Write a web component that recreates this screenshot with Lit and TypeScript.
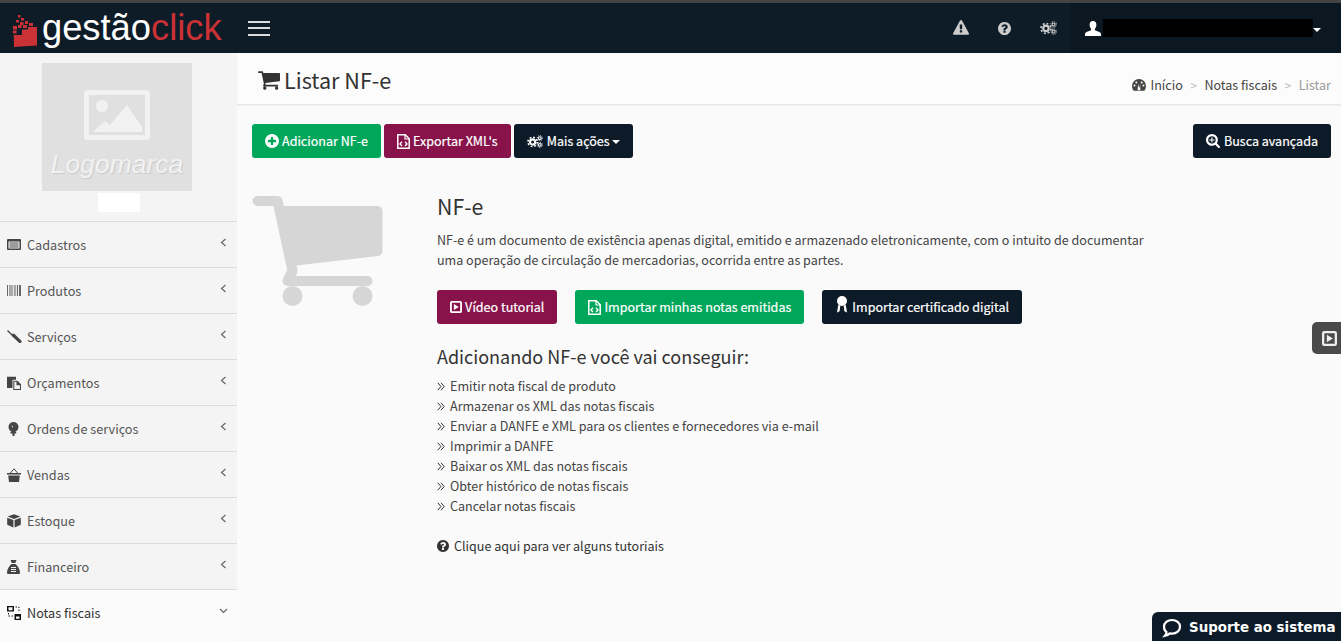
import { LitElement, html, css } from 'lit';
import { customElement } from 'lit/decorators.js';

// font awesome style paths, drawn on a 1792 grid
const P = {
  cart: 'M704 1536q0 52-38 90t-90 38-90-38-38-90 38-90 90-38 90 38 38 90zm896 0q0 52-38 90t-90 38-90-38-38-90 38-90 90-38 90 38 38 90zm128-1088v512q0 24-16.500 42.500t-40.500 21.500l-1044 122q13 60 13 70 0 16-24 64h920q26 0 45 19t19 45-19 45-45 19h-1024q-26 0-45-19t-19-45q0-11 8-31.500t16-36 21.500-40 15.500-29.500l-177-823h-204q-26 0-45-19t-19-45 19-45 45-19h256q16 0 28.500 6.500t19.500 15.500 13 24.500 8 26 5.500 29.500 4.500 26h1201q26 0 45 19t19 45z',
  plus: 'M1344 960v-128q0-26-19-45t-45-19h-256v-256q0-26-19-45t-45-19h-128q-26 0-45 19t-19 45v256h-256q-26 0-45 19t-19 45v128q0 26 19 45t45 19h256v256q0 26 19 45t45 19h128q26 0 45-19t19-45v-256h256q26 0 45-19t19-45zm320-64q0 209-103 385.500t-279.500 279.500-385.500 103-385.500-103-279.500-279.500-103-385.500 103-385.500 279.500-279.500 385.500-103 385.500 103 279.500 279.500 103 385.500z',
  question: 'M1024 1376v-192q0-14-9-23t-23-9h-192q-14 0-23 9t-9 23v192q0 14 9 23t23 9h192q14 0 23-9t9-23zm256-672q0-88-55.500-163t-138.500-116-170-41q-243 0-371 213-15 24 8 42l132 100q7 6 19 6 16 0 25-12 53-68 86-92 34-24 86-24 48 0 85.500 26t37.500 59q0 38-20 61t-68 45q-63 28-115.500 86.500t-52.500 125.500v36q0 14 9 23t23 9h192q14 0 23-9t9-23q0-19 21.500-49.500t54.500-49.500q32-18 49-28.500t46-35 44.500-48 28-60.500 12.500-81zm384 192q0 209-103 385.500t-279.500 279.500-385.500 103-385.500-103-279.500-279.500-103-385.500 103-385.500 279.500-279.500 385.500-103 385.500 103 279.500 279.500 103 385.500z',
  warning: 'M1024 1375v-190q0-14-9.500-23.500t-22.500-9.500h-192q-13 0-22.500 9.500t-9.500 23.500v190q0 14 9.500 23.500t22.500 9.500h192q13 0 22.500-9.500t9.500-23.500zm-2-374l18-459q0-12-10-19-13-11-24-11h-220q-11 0-24 11-10 7-10 21l17 457q0 10 10 16.500t24 6.500h185q14 0 23.500-6.500t10.500-16.500zm-14-934l768 1408q35 63-2 126-17 29-46.500 46t-63.500 17h-1536q-34 0-63.500-17t-46.500-46q-37-63-2-126l768-1408q17-31 47-49t65-18 65 18 47 49z',
  search: 'M1088 800v64q0 13-9.500 22.500t-22.500 9.500h-224v224q0 13-9.500 22.500t-22.500 9.500h-64q-13 0-22.500-9.500t-9.500-22.500v-224h-224q-13 0-22.500-9.500t-9.500-22.500v-64q0-13 9.500-22.500t22.500-9.500h224v-224q0-13 9.500-22.500t22.500-9.500h64q13 0 22.500 9.500t9.500 22.500v224h224q13 0 22.500 9.500t9.500 22.500zm128 32q0-185-131.500-316.500t-316.500-131.500-316.500 131.500-131.500 316.500 131.500 316.500 316.500 131.500 316.500-131.500 131.500-316.500zm512 832q0 53-37.500 90.500t-90.500 37.500q-54 0-90-38l-343-342q-179 124-399 124-143 0-273.500-55.500t-225-150-150-225-55.500-273.500 55.500-273.500 150-225 225-150 273.500-55.500 273.500 55.500 225 150 150 225 55.500 273.500q0 220-124 399l343 343q37 37 37 90z',
};

const CIRCLE_BOX = '128 128 1536 1536';
const SEARCH_BOX = '64 128 1664 1664';

const fa = (d: string, size = 14, box = '0 0 1792 1792', cls = 'ic') => html`<svg class=${cls} width=${size} height=${size} viewBox=${box} fill="currentColor"><path d=${d}></path></svg>`;

const cogs = (w = 17, h = 14) => html`<svg class="ic wide" width=${w} height=${h} viewBox="0 0 20 16" fill="none" stroke="currentColor">
  <circle cx="7" cy="8.500" r="3.200" stroke-width="2.600"></circle>
  <circle cx="7" cy="8.500" r="5.800" stroke-width="2" stroke-dasharray="2.300 2.250"></circle>
  <circle cx="16" cy="3.800" r="1.700" stroke-width="1.400"></circle>
  <circle cx="16" cy="3.800" r="3.200" stroke-width="1.200" stroke-dasharray="1.200 1.310"></circle>
  <circle cx="16" cy="12.200" r="1.700" stroke-width="1.400"></circle>
  <circle cx="16" cy="12.200" r="3.200" stroke-width="1.200" stroke-dasharray="1.200 1.310"></circle>
</svg>`;

const fileCode = () => html`<svg class="ic" width="13" height="15" viewBox="0 0 13 15" fill="none" stroke="currentColor">
  <path d="M.8 .8h7.500l3.900 3.900v9.500H.8z" stroke-width="1.500"></path>
  <path d="M8 1v4h4" stroke-width="1.200"></path>
  <path d="M5 7.800l-2 2.100 2 2.100M8 7.800l2 2.100-2 2.100" stroke-width="1.400"></path>
</svg>`;

const playBox = (size = 12) => html`<svg class="ic" width=${size} height=${size} viewBox="0 0 13 13"><path fill="currentColor" fill-rule="evenodd" d="M2 0h9a2 2 0 0 1 2 2v9a2 2 0 0 1-2 2H2a2 2 0 0 1-2-2V2a2 2 0 0 1 2-2zM2 2v9h9V2zM4.200 3.200l5.300 3.300-5.300 3.300z"></path></svg>`;

const ribbon = () => html`<svg class="ic ribbon" width="14" height="18" viewBox="0 0 14 18" fill="currentColor">
  <circle cx="7" cy="5" r="5"></circle>
  <path d="M3.200 9l-1.200 7.500 2.600-1.300.8-5.700zM10.800 9l1.200 7.500-2.600-1.300-.8-5.700z"></path>
</svg>`;

const userIc = () => html`<svg class="ic" width="16" height="15" viewBox="0 0 16 15" fill="currentColor">
  <path d="M8 0c2.200 0 3.400 1.600 3.400 3.800 0 1.700-.7 3.200-1.500 4.100v1.300c1.500.8 5.600 1.500 6.100 3.300V15H0v-2.500c.5-1.800 4.600-2.500 6.100-3.300V7.900C5.300 7 4.600 5.500 4.600 3.800 4.600 1.600 5.800 0 8 0z"></path>
</svg>`;

const gauge = () => html`<svg class="ic" width="14" height="12" viewBox="0 0 14 12">
  <path fill="currentColor" fill-rule="evenodd" d="M7 0a7 7 0 0 1 7 7c0 1.900-.6 3.500-1.700 4.700H1.700C.6 10.500 0 8.900 0 7a7 7 0 0 1 7-7zM6.100 4.800L5.800 9.300a1.400 1.400 0 1 0 2.500 0L8.300 4.800 7.600 8.400H7zM2.500 5.500a1 1 0 1 0 0 2 1 1 0 0 0 0-2zM4.300 2.400a1 1 0 1 0 0 2 1 1 0 0 0 0-2zM9.700 2.400a1 1 0 1 0 0 2 1 1 0 0 0 0-2zM11.500 5.500a1 1 0 1 0 0 2 1 1 0 0 0 0-2z"></path>
</svg>`;

const sideIcons: Record<string, any> = {
  list: html`<svg width="14" height="11" viewBox="0 0 14 11"><path fill="currentColor" fill-rule="evenodd" d="M1 0h12a1 1 0 0 1 1 1v9a1 1 0 0 1-1 1H1a1 1 0 0 1-1-1V1a1 1 0 0 1 1-1zM1.500 2.500v7h11v-7zM2.500 3.500h9v1h-9zM2.500 5.500h9v1h-9zM2.500 7.500h9v1h-9z"></path></svg>`,
  barcode: html`<svg width="14" height="11" viewBox="0 0 14 11" fill="currentColor" opacity=".8"><path d="M0 0h1v11H0zM2 0h.6v11H2zM3.500 0h1v11h-1zM5.500 0h.6v11h-.6zM7 0h.6v11H7zM8.500 0h.6v11h-.6zM10 0h1v11h-1zM12 0h2v11h-2z"></path></svg>`,
  screwdriver: html`<svg width="15" height="14" viewBox="0 0 15 14"><path d="M.5 .5l5 5" stroke="currentColor" stroke-width="1.200" fill="none"></path><path fill="currentColor" d="M5 4l2-.6 7.200 7c.7.800.5 1.700 0 2.300-.6.500-1.500.6-2.200 0L4.800 6z"></path></svg>`,
  paste: html`<svg width="14" height="14" viewBox="0 0 14 14" fill="currentColor"><path d="M0 .8h9v3H5.500v8.200H0z"></path><path fill-rule="evenodd" d="M6.300 4.800h4.200l3.500 3.500V14H6.300zM7.300 5.800v7.200h5.700V9.300h-3.500V5.800z"></path></svg>`,
  award: html`<svg width="13" height="14" viewBox="0 0 13 14"><path fill="currentColor" fill-rule="evenodd" d="M6.500 0a5 5 0 0 1 5 5c0 2.200-1.400 4-3.300 4.700l1 .3v1.500H7.500V14h-2v-2.500H3.500V10l1.300-.3C2.900 9 1.500 7.200 1.500 5a5 5 0 0 1 5-5zM4.600 4.300l1.400 2-.8-3.200z"></path></svg>`,
  basket: html`<svg width="14" height="14" viewBox="0 0 14 14"><path fill="none" stroke="currentColor" stroke-width="1" d="M3 5.500L7 .8l4 4.700"></path><path fill="currentColor" d="M0 5h14v1.500H0zM1.200 7.500h11.600L12 14H2z"></path></svg>`,
  cube: html`<svg width="14" height="14" viewBox="0 0 14 14" fill="currentColor"><path d="M7 .3l6.300 2.300L7 5 .7 2.600zM.2 3.700l6.200 2.400V13.500L.2 10.700zM13.800 3.700L7.600 6.100v7.400l6.200-2.800z"></path></svg>`,
  bag: html`<svg width="13" height="14" viewBox="0 0 13 14"><path fill="currentColor" fill-rule="evenodd" d="M3.500 0h6L8.300 3H4.700zM4.500 4h4c2.500 2 4.500 5.500 4.500 8.500 0 1-.7 1.500-1.500 1.500h-10C.7 14 0 13.500 0 12.500 0 9.500 2 6 4.500 4zM4 7v1h5V7zM4 9v1h5V9zM4 11v1h5v-1z"></path></svg>`,
  nodes: html`<svg width="14" height="14" viewBox="0 0 14 14"><path fill="currentColor" fill-rule="evenodd" d="M0 0h7v5.500H0zM1.500 1.300v2.900h4V1.300zM7.500 8h6.500v6H7.500zM9 10.500v2.200h3.500v-2.200z"></path><path stroke="currentColor" stroke-dasharray="1.500 1.500" fill="none" d="M8.500 1h3.500v5.500M1.500 7v3H6"></path></svg>`,
};

const menu = [
  { label: 'Cadastros', icon: 'list' },
  { label: 'Produtos', icon: 'barcode' },
  { label: 'Serviços', icon: 'screwdriver' },
  { label: 'Orçamentos', icon: 'paste' },
  { label: 'Ordens de serviços', icon: 'award' },
  { label: 'Vendas', icon: 'basket' },
  { label: 'Estoque', icon: 'cube' },
  { label: 'Financeiro', icon: 'bag' },
  { label: 'Notas fiscais', icon: 'nodes', open: true },
];

const benefits = [
  'Emitir nota fiscal de produto',
  'Armazenar os XML das notas fiscais',
  'Enviar a DANFE e XML para os clientes e fornecedores via e-mail',
  'Imprimir a DANFE',
  'Baixar os XML das notas fiscais',
  'Obter histórico de notas fiscais',
  'Cancelar notas fiscais',
];

@customElement('app-root')
export class AppRoot extends LitElement {
  static styles = css`
    :host {
      display: block;
      position: relative;
      height: 641px;
      overflow: hidden;
      background: #fafafa;
      color: #333;
      font-family: "Noto Sans CJK SC", "Open Sans", sans-serif;
      font-size: 12.550px;
      line-height: 20px;
    }
    svg { display: block; flex: none; }
    .topbar {
      height: 50px;
      border-top: 3px solid #444;
      background: #0e1c28;
      display: flex;
      align-items: center;
    }
    .logo {
      width: 237px;
      display: flex;
      align-items: center;
      padding-left: 13px;
      box-sizing: border-box;
      font-family: "Liberation Sans", Arial, sans-serif;
      font-size: 36.300px;
      line-height: 50px;
      color: #fff;
      height: 50px;
    }
    .logo b { font-weight: 400; color: #cb3236; }
    .logo svg { margin: 5px 5px 0 0; }
    .burger { width: 22px; margin-left: 11px; display: flex; flex-direction: column; gap: 4.500px; }
    .burger i { display: block; height: 2px; background: #dcdcdc; }
    .top-right { margin-left: auto; display: flex; align-items: center; height: 100%; color: #ccc; }
    .top-ic { width: 43.500px; display: flex; justify-content: center; }
    .user {
      width: 271px;
      height: 100%;
      background: #0b1822;
      display: flex;
      align-items: center;
      padding-left: 15px;
      box-sizing: border-box;
      color: #fff;
    }
    .redact { width: 210px; height: 18px; background: #000; margin-left: 2px; }
    .caret {
      width: 0; height: 0;
      border-left: 4px solid transparent;
      border-right: 4px solid transparent;
      border-top: 4px solid currentColor;
    }
    .user .caret { margin-top: 3px; }
    .body { display: flex; height: 588px; }
    .side { width: 237px; flex: none; background: #f4f4f4; }
    .brand { height: 168px; display: flex; flex-direction: column; align-items: center; padding-top: 10px; box-sizing: border-box; }
    .placeholder {
      width: 150px; height: 128px;
      margin-right: 3px;
      background: #e0e0e0;
      display: flex;
      flex-direction: column;
      align-items: center;
      padding-top: 27px;
      box-sizing: border-box;
      color: #f2f2f2;
    }
    .placeholder span {
      font-family: "Liberation Sans", Arial, sans-serif;
      font-style: italic;
      font-size: 26.500px;
      line-height: 28px;
      margin-top: 10px;
      text-shadow: 1px 1px 1px #c9c9c9;
    }
    .white { width: 42px; height: 19px; background: #fff; margin-top: 2px; }
    .item {
      height: 46px;
      border-top: 1px solid #dcdcdc;
      box-sizing: border-box;
      display: flex;
      align-items: center;
      padding: 0 9px 0 7px;
      color: #555;
      font-size: 12.700px;
    }
    .item .sic { width: 20px; display: flex; color: #444; }
    .item .chev { margin-left: auto; margin-top: -4px; color: #666; }
    .item.open { background: #fbfbfb; color: #333; height: 60px; padding-bottom: 14px; }
    .item.open .sic { color: #111; }
    .main { flex: 1; min-width: 0; position: relative; }
    .head {
      height: 52px;
      background: #fcfcfc;
      border-bottom: 1px solid #e6e6e6;
      box-shadow: 0 1px 1px #f0f0f0;
      box-sizing: border-box;
      display: flex;
      align-items: center;
      padding: 3px 10px 0 21px;
    }
    .head h1 { margin: 0 0 0 4px; font-size: 21.600px; font-weight: 400; line-height: 30px; color: #333; }
    .head .cart { color: #333; }
    .crumbs { margin-left: auto; display: flex; align-items: center; color: #444; padding-top: 9px; }
    .crumbs svg { margin-right: 5px; color: #444; }
    .crumbs .sep { color: #bbb; margin: 0 7.500px; font-size: 12px; }
    .crumbs .last { color: #999; }
    .actions { display: flex; gap: 3px; padding: 19px 10px 0 15px; }
    .btn {
      height: 34px;
      box-sizing: border-box;
      border-radius: 3px;
      color: #fff;
      display: inline-flex;
      align-items: center;
      padding: 0 13px;
      white-space: nowrap;
      -webkit-text-stroke: .2px #fff;
    }
    .btn svg { margin-right: 3px; }
    .btn svg.wide { margin-right: 4px; }
    .btn svg.ribbon { margin-top: -4px; }
    .green { background: #00a65a; }
    .wine { background: #87134a; }
    .dark { background: #0d1b28; }
    .btn.push { margin-left: auto; }
    .btn .caret { margin: 2px 0 0 2px; }
    .intro { display: flex; padding: 36px 0 0 15px; }
    .big-cart { width: 131px; height: 110px; color: #d6d6d6; margin-right: 54px; flex: none; margin-top: 2px; }
    .copy { width: 760px; }
    .copy h2 { margin: 0; font-size: 21.300px; font-weight: 400; line-height: 26px; margin-top: -1px; }
    .copy p { margin: 11px 0 0; color: #444; }
    .row { display: flex; gap: 18px; margin-top: 20px; }
    .copy h3 { margin: 19px 0 0; font-size: 18px; font-weight: 400; line-height: 26px; color: #333; }
    ul { list-style: none; margin: 7px 0 0; padding: 0; color: #444; }
    li { display: flex; align-items: center; height: 20px; }
    li svg { margin-right: 5px; }
    .tut { display: flex; align-items: center; margin-top: 20px; color: #333; }
    .tut svg { margin-right: 5px; }
    .video {
      position: absolute;
      right: 0; top: 269px;
      width: 29px; height: 32px;
      background: #4a4a4a;
      border-radius: 5px 0 0 5px;
      display: flex;
      align-items: center;
      padding-left: 10px;
      box-sizing: border-box;
      color: #eee;
    }
    .support {
      position: absolute;
      right: 0; bottom: 0;
      width: 189px; height: 29px;
      background: #0d1b28;
      border-radius: 6px 0 0 0;
      color: #fff;
      display: flex;
      align-items: center;
      padding: 2px 0 0 10px;
      box-sizing: border-box;
      font-family: "DejaVu Sans", Verdana, sans-serif;
      font-weight: 700;
      font-size: 13.400px;
      white-space: nowrap;
    }
    .support svg { margin-right: 7px; }
  `;

  render() {
    return html`
      <div class="topbar">
        <div class="logo">
          <svg width="24" height="32" viewBox="0 0 24 32" fill="#cb3236">
            <path d="M5 0h2.500v2.500H5zM8 3h3v2.500H8zM3 5h3v2.500H3zM12 6h3v3h-3zM7 7h3.500v3H7zM16 8h4v3h-4zM0 11h4v3.500H0zM5 10h3.500v3H5zM10 10h4v3h-4zM0 15.500h3.500v3H0z"></path>
            <path d="M9 14.500h6V12h9v18.500L1 32l-.3-12H9z"></path>
          </svg>
          <span>gestão<b>click</b></span>
        </div>
        <div class="burger"><i></i><i></i><i></i></div>
        <div class="top-right">
          <span class="top-ic">${fa(P.warning, 16)}</span>
          <span class="top-ic">${fa(P.question, 13, CIRCLE_BOX)}</span>
          <span class="top-ic">${cogs()}</span>
          <div class="user">
            ${userIc()}
            <span class="redact"></span>
            <span class="caret"></span>
          </div>
        </div>
      </div>
      <div class="body">
        <aside class="side">
          <div class="brand">
            <div class="placeholder">
              <svg width="66" height="50" viewBox="0 0 66 50" fill="none">
                <rect x="2.500" y="2.500" width="61" height="45" rx="1" stroke="#f2f2f2" stroke-width="5"></rect>
                <circle cx="18" cy="16" r="6" fill="#f2f2f2"></circle>
                <path d="M9 42l12-11 5 4 17-20 15 22v5z" fill="#f2f2f2"></path>
              </svg>
              <span>Logomarca</span>
            </div>
            <div class="white"></div>
          </div>
          ${menu.map(m => html`
            <div class="item ${m.open ? 'open' : ''}">
              <span class="sic">${sideIcons[m.icon]}</span>
              <span>${m.label}</span>
              <svg class="chev" width="9" height="9" viewBox="0 0 9 9" fill="none" stroke="currentColor" stroke-width="1.200">
                <path d=${m.open ? 'M1 3l3.500 3.500L8 3' : 'M6.500 1L2.500 4.500l4 3.500'}></path>
              </svg>
            </div>
          `)}
        </aside>
        <main class="main">
          <div class="head">
            <svg class="cart" width="22" height="19" viewBox="64 256 1664 1408" fill="currentColor"><path d=${P.cart}></path></svg>
            <h1>Listar NF-e</h1>
            <div class="crumbs">
              ${gauge()}<span>Início</span><span class="sep">&gt;</span><span>Notas fiscais</span><span class="sep">&gt;</span><span class="last">Listar</span>
            </div>
          </div>
          <div class="actions">
            <span class="btn green">${fa(P.plus, 14, CIRCLE_BOX)}Adicionar NF-e</span>
            <span class="btn wine">${fileCode()}Exportar XML's</span>
            <span class="btn dark">${cogs(16, 13)}Mais ações<span class="caret"></span></span>
            <span class="btn dark push">${fa(P.search, 14, SEARCH_BOX, 'ic wide')}Busca avançada</span>
          </div>
          <div class="intro">
            <svg class="big-cart" viewBox="64 256 1664 1408" fill="currentColor"><path d=${P.cart}></path></svg>
            <div class="copy">
              <h2>NF-e</h2>
              <p>NF-e é um documento de existência apenas digital, emitido e armazenado eletronicamente, com o intuito de documentar<br>uma operação de circulação de mercadorias, ocorrida entre as partes.</p>
              <div class="row">
                <span class="btn wine">${playBox()}Vídeo tutorial</span>
                <span class="btn green">${fileCode()}Importar minhas notas emitidas</span>
                <span class="btn dark">${ribbon()}Importar certificado digital</span>
              </div>
              <h3>Adicionando NF-e você vai conseguir:</h3>
              <ul>
                ${benefits.map(b => html`<li>
                  <svg width="8" height="9" viewBox="0 0 8 9" fill="none" stroke="#333" stroke-width="1"><path d="M.8 .8l3.200 3.700-3.200 3.700M4 .8l3.200 3.700-3.200 3.700"></path></svg>
                  ${b}
                </li>`)}
              </ul>
              <div class="tut">${fa(P.question, 12, CIRCLE_BOX)}Clique aqui para ver alguns tutoriais</div>
            </div>
          </div>
          <div class="video">${playBox(15)}</div>
          <div class="support">
            <svg width="20" height="20" viewBox="0 0 20 20" fill="none" stroke="#fff" stroke-width="2.200">
              <path d="M10 2c4.600 0 8 2.900 8 6.800s-3.400 6.800-8 6.800c-.8 0-1.500-.1-2.200-.2-1.400 1.300-3 2-4.800 2.400 1-1.100 1.500-2.300 1.500-3.700C2.900 13 2 11 2 8.800 2 4.900 5.400 2 10 2z"></path>
            </svg>
            Suporte ao sistema
          </div>
        </main>
      </div>
    `;
  }
}
